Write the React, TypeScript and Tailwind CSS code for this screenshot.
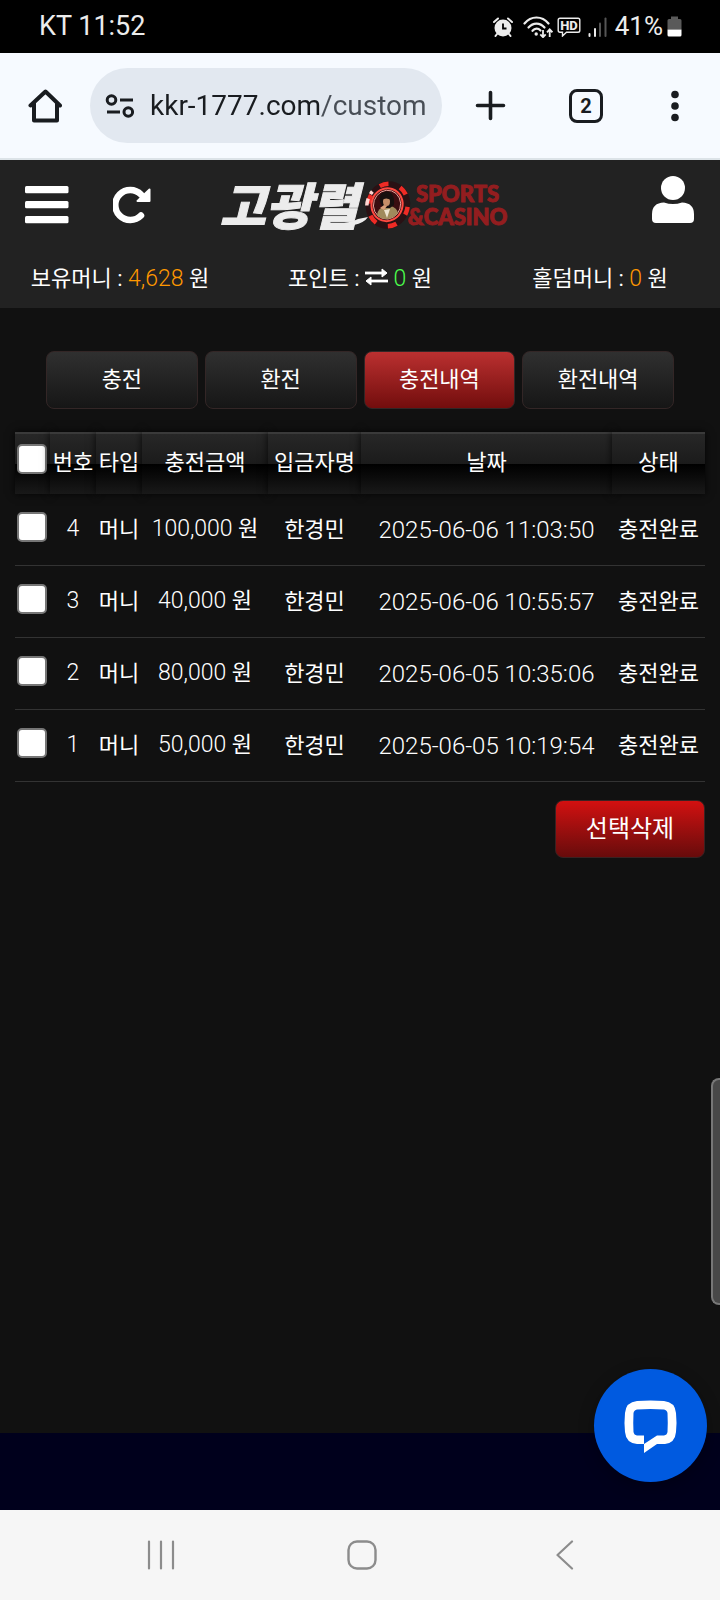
import React from 'react';

interface Deposit {
  id: number;
  type: string;
  amount: string;
  name: string;
  date: string;
  status: string;
}

const deposits: Deposit[] = [
  { id: 4, type: '머니', amount: '100,000', name: '한경민', date: '2025-06-06 11:03:50', status: '충전완료' },
  { id: 3, type: '머니', amount: '40,000', name: '한경민', date: '2025-06-06 10:55:57', status: '충전완료' },
  { id: 2, type: '머니', amount: '80,000', name: '한경민', date: '2025-06-05 10:35:06', status: '충전완료' },
  { id: 1, type: '머니', amount: '50,000', name: '한경민', date: '2025-06-05 10:19:54', status: '충전완료' },
];

const tabs = ['충전', '환전', '충전내역', '환전내역'];
const activeTab = '충전내역';

const columns = [
  { label: '번호', width: 'w-[46px]' },
  { label: '타입', width: 'w-[46px]' },
  { label: '충전금액', width: 'w-[126px]' },
  { label: '입금자명', width: 'w-[93px]' },
  { label: '날짜', width: '' },
  { label: '상태', width: 'w-[93px]' },
];

const thClass =
  'h-[62px] border-t-2 border-[#3a3a3a] bg-[linear-gradient(#272727,#1b1b1b_50%,#000_50%,#191919)] p-0 pb-1 font-normal shadow-[0_0_8px_rgba(0,0,0,0.8)]';

const StatusBar = () => (
  <div className="flex h-[53px] items-center justify-between bg-black pr-[38px] pl-[39px] text-[26px] text-[#ececec]">
    <span className="text-[27px]">KT 11:52</span>
    <div className="flex items-center">
      {/* alarm */}
      <svg className="mr-2.5 h-5 w-5" viewBox="0 0 20 20" fill="none">
        <circle cx="10" cy="11" r="8.5" fill="#ececec" />
        <path d="M1 5 5 1.5M19 5 15 1.5" stroke="#ececec" strokeWidth="2" strokeLinecap="round" />
        <path d="M4 17 2.5 19M16 17 17.5 19" stroke="#ececec" strokeWidth="2" strokeLinecap="round" />
        <path d="M10 6.5V11.5H13.5" stroke="#000" strokeWidth="1.8" />
      </svg>
      {/* wifi */}
      <svg className="mr-1 h-[22px] w-[30px]" viewBox="0 0 30 22" fill="none" stroke="#ececec">
        <path d="M1.5 7.5C8 -0.5 19 -0.5 25.5 7.5" strokeWidth="2.2" strokeLinecap="round" />
        <path d="M5.5 11.5C10 6.2 17 6.2 21.5 11.5" strokeWidth="2.2" strokeLinecap="round" />
        <path d="M9.5 14.8C11.8 12 15.2 12 17.5 14.5" strokeWidth="2.2" strokeLinecap="round" />
        <circle cx="13.2" cy="18" r="1.7" fill="#ececec" stroke="none" />
        <path d="M20 14V21M17.3 18.3 20 21.2 22.7 18.3" strokeWidth="1.8" />
        <path d="M26.7 21V14M24 16.3 26.7 13.4 29.4 16.3" strokeWidth="1.8" />
      </svg>
      {/* HD voice */}
      <svg className="mr-[7px] h-5 w-6" viewBox="0 0 24 20" fill="none">
        <path d="M3 1.2H21Q22.8 1.2 22.8 3V13.5Q22.8 15.3 21 15.3H9.5L5.5 19V15.3H3Q1.2 15.3 1.2 13.5V3Q1.2 1.2 3 1.2Z" stroke="#ececec" strokeWidth="1.4" />
        <text x="12" y="13" textAnchor="middle" fontSize="13" fontWeight="800" fontFamily="Roboto, sans-serif" fill="#ececec">HD</text>
      </svg>
      {/* signal */}
      <svg className="mr-2 h-5 w-[19px]" viewBox="0 0 19 20">
        <rect x="0.5" y="16" width="2" height="4" rx="1" fill="#ececec" />
        <rect x="6" y="11" width="2" height="9" rx="1" fill="#ececec" />
        <rect x="11" y="5.5" width="2" height="14.5" rx="1" fill="#555" />
        <rect x="16.5" y="0.5" width="2" height="19.5" rx="1" fill="#555" />
      </svg>
      <span className="mr-1">41%</span>
      {/* battery */}
      <svg className="h-[21px] w-[15px]" viewBox="0 0 15 21">
        <path d="M4 0.5H11V3H13Q14.5 3 14.5 4.5V13.5H0.5V4.5Q0.5 3 2 3H4Z" fill="#5a5a5a" />
        <path d="M0.5 13.5H14.5V19Q14.5 20.5 13 20.5H2Q0.5 20.5 0.5 19Z" fill="#fff" />
      </svg>
    </div>
  </div>
);

const BrowserBar = () => (
  <div className="flex h-[107px] items-center border-b-2 border-[#dce3e8] bg-[#f6faff] pr-7 pl-7">
    <button type="button" aria-label="Home">
      <svg className="h-[36px] w-[34px]" viewBox="0 0 34 36" fill="none" stroke="#191c20" strokeWidth="4" strokeLinejoin="round" strokeLinecap="round">
        <path d="M2.5 17.5 17.5 3.5 32 17.5M6 15V32.5H29V15" />
      </svg>
    </button>
    <div className="ml-7 flex h-[75px] min-w-0 flex-1 items-center rounded-full bg-[#e2e8f0] px-[15px]">
      <svg className="mr-4 h-6 w-[29px] shrink-0" viewBox="0 0 29 24" fill="none" stroke="#191c20" strokeWidth="3">
        <circle cx="6.5" cy="6" r="4.3" />
        <path d="M15 6H28M2 18H15" />
        <circle cx="23.3" cy="18" r="4.3" />
      </svg>
      <input
        type="text"
        readOnly
        aria-label="Address"
        defaultValue="kkr-1777.com/custom"
        className="h-12 w-full min-w-0 bg-[linear-gradient(90deg,#191c20_172px,#484e56_172px)] bg-clip-text text-[28px] text-transparent outline-none"
      />
    </div>
    <button type="button" aria-label="New tab" className="ml-[33px]">
      <svg className="h-[31px] w-[31px]" viewBox="0 0 31 31" stroke="#191c20" strokeWidth="3.6" strokeLinecap="round">
        <path d="M15.5 2.5V28.5M2.5 15.5H28.5" />
      </svg>
    </button>
    <button type="button" className="ml-[63px] flex h-[34px] w-[34px] items-center justify-center rounded-lg border-[3px] border-[#191c20] text-xl font-bold text-[#191c20]">
      2
    </button>
    <button type="button" aria-label="More" className="ml-[61px]">
      <svg className="h-8 w-7" viewBox="0 0 28 32" fill="#191c20">
        <circle cx="11" cy="4.5" r="3.8" />
        <circle cx="11" cy="16" r="3.8" />
        <circle cx="11" cy="27.5" r="3.8" />
      </svg>
    </button>
  </div>
);

const Chip = () => (
  <svg className="h-[50px] w-12 shrink-0" viewBox="0 0 48 50" fill="none">
    <g transform="rotate(18 24 25)">
      <ellipse cx="24" cy="25" rx="22" ry="24" fill="#2a1114" />
      <ellipse cx="24" cy="25" rx="19.6" ry="21.5" stroke="#ef2b25" strokeWidth="4.5" strokeDasharray="9 12.5" strokeDashoffset="5" />
      <path d="M4 32A21 22 0 0 1 5 17" stroke="#ffd5d0" strokeWidth="3.5" strokeDasharray="7 5" />
      <ellipse cx="23" cy="25" rx="15.5" ry="16.5" fill="#3a0d10" stroke="#ff4a41" strokeWidth="2" />
      <ellipse cx="23" cy="25" rx="13.5" ry="14.5" stroke="#ffb3ab" strokeWidth="0.8" />
    </g>
    {/* portrait */}
    <path d="M13 35Q14 28 20 27L27 26Q33 28 34 33Q29 39 22 39Q16 39 13 35Z" fill="#a08a5c" />
    <path d="M20 30 23 38 26 29Z" fill="#eee4d0" />
    <path d="M16 22Q14 12 23 11.5Q31 12 30 25L26 28H19Z" fill="#17100f" />
    <ellipse cx="22.5" cy="21.5" rx="3.5" ry="4.5" fill="#c58e68" />
    <path d="M17 17Q22 14 28 18L27 20Q22 17 18 20Z" fill="#17100f" />
    <path d="M16 28 20 25 23 26 20 30Z" fill="#dba17a" />
  </svg>
);

const Logo = () => (
  <a href="#" className="flex items-center">
    <span className="relative mr-1.5 pb-1 font-['Noto_Sans_CJK_KR',sans-serif] text-[50px] leading-[50px] font-black whitespace-nowrap text-[#ececec] italic [-webkit-text-stroke:1px_#ececec]">
      고광렬
      <svg className="absolute -right-2.5 bottom-1 h-3 w-12" viewBox="0 0 48 12" fill="#ececec">
        <path d="M2 6Q24 10 38 3L48 1Q44 7 34 9Q16 13 2 10Z" />
      </svg>
    </span>
    <Chip />
    <span className="-ml-1 flex flex-col items-center font-['Lato',sans-serif] text-[22px] leading-[23px] font-black text-[#931d1f] [-webkit-text-stroke:1px_#931d1f]">
      <span>SPORTS</span>
      <span>&amp;CASINO</span>
    </span>
  </a>
);

const Header = () => (
  <header className="bg-[#222]">
    <div className="flex h-[90px] items-center justify-between pr-[26px] pl-[25px]">
      <div className="flex items-center gap-11">
        <button type="button" aria-label="Menu">
          <svg className="h-[38px] w-11" viewBox="0 0 44 38" fill="#fff">
            <rect y="0" width="43.5" height="7.2" rx="1.5" />
            <rect y="15" width="43.5" height="7.2" rx="1.5" />
            <rect y="30" width="43.5" height="7.2" rx="1.5" />
          </svg>
        </button>
        <button type="button" aria-label="Refresh">
          <svg className="h-[38px] w-[38px]" viewBox="0 0 38 38" fill="none">
            <path d="M28 29.5A15 15 0 1 1 28 8.5" stroke="#fff" strokeWidth="6.5" strokeLinecap="round" />
            <path d="M36.5 3.5V15H24.5Z" fill="#fff" stroke="#fff" strokeWidth="2" strokeLinejoin="round" />
          </svg>
        </button>
      </div>
      <Logo />
      <button type="button" aria-label="Account" className="ml-[76px] self-start pt-4">
        <svg className="h-12 w-[42px]" viewBox="0 0 42 48" fill="#fff">
          <circle cx="21" cy="12" r="12" />
          <path d="M0 40V38Q0 27 12 26.5Q21 29.5 30 26.5Q42 27 42 38V43Q42 47 38 47H4Q0 47 0 43Z" />
        </svg>
      </button>
    </div>
    <div className="grid h-[58px] grid-cols-3 text-center leading-[58px]">
      <div>
        보유머니 : <span className="text-[23px] font-light text-[#ff9800]">4,628</span> 원
      </div>
      <div>
        포인트 :{' '}
        <button type="button" aria-label="Exchange points" className="align-baseline leading-none">
          <svg className="h-[18px] w-[23px]" viewBox="0 0 23 18" fill="#fff" stroke="#fff" strokeLinejoin="round">
            <path d="M0 5H17" strokeWidth="2.8" />
            <path d="M17 1 22 5 17 9Z" strokeWidth="1" />
            <path d="M6 13H23" strokeWidth="2.8" />
            <path d="M6 9 1 13 6 17Z" strokeWidth="1" />
          </svg>
        </button>{' '}
        <span className="text-[23px] font-light text-[#4cff4c]">0</span> 원
      </div>
      <div>
        홀덤머니 : <span className="text-[23px] font-light text-[#ff9800]">0</span> 원
      </div>
    </div>
  </header>
);

const Check: React.FC<{ label: string }> = ({ label }) => (
  <input
    type="checkbox"
    aria-label={label}
    className="block h-[30px] w-[30px] appearance-none rounded-[5px] border-2 border-[#767676] bg-white checked:bg-blue-600"
  />
);

const DepositTable = () => (
  <table className="w-full table-fixed border-separate border-spacing-0 text-center">
    <thead>
      <tr>
        <th className={`w-[35px] ${thClass}`}>
          <div className="-mt-1.5 pl-0.5">
            <Check label="전체선택" />
          </div>
        </th>
        {columns.map((col) => (
          <th key={col.label} className={`${col.width} ${thClass}`}>
            {col.label}
          </th>
        ))}
      </tr>
    </thead>
    <tbody>
      {deposits.map((row) => (
        <tr key={row.id} className="h-[72px] whitespace-nowrap *:border-b *:border-[#333] *:p-0">
          <td>
            <div className="-mt-1.5 pl-0.5">
              <Check label={`${row.id}`} />
            </div>
          </td>
          <td className="text-[23px] font-light">{row.id}</td>
          <td>{row.type}</td>
          <td>
            <span className="text-[23px] font-light">{row.amount}</span> 원
          </td>
          <td>{row.name}</td>
          <td className="text-2xl font-light">{row.date}</td>
          <td>{row.status}</td>
        </tr>
      ))}
    </tbody>
  </table>
);

const NavBar = () => (
  <nav className="flex h-[90px] items-center justify-between bg-[#f6f6f6] pr-[142px] pl-[146px]">
    <button type="button" aria-label="Recents">
      <svg className="h-[30px] w-[30px]" viewBox="0 0 30 30" stroke="#8c8c8c" strokeWidth="2.2" strokeLinecap="round">
        <path d="M3 1.5V28.5M15 1.5V28.5M27 1.5V28.5" />
      </svg>
    </button>
    <button type="button" aria-label="Home screen">
      <svg className="h-[30px] w-[30px]" viewBox="0 0 30 30" fill="none" stroke="#8c8c8c" strokeWidth="2.4">
        <rect x="1.5" y="1.5" width="27" height="27" rx="8.5" />
      </svg>
    </button>
    <button type="button" aria-label="Back">
      <svg className="h-[30px] w-[30px]" viewBox="0 0 30 30" fill="none" stroke="#8c8c8c" strokeWidth="2.2" strokeLinecap="round" strokeLinejoin="round">
        <path d="M24 1.5 9.5 15 24 28.5" />
      </svg>
    </button>
  </nav>
);

const App: React.FC = () => {
  return (
    <div className="flex min-h-screen flex-col bg-[#111] font-['Roboto','Noto_Sans_CJK_KR',sans-serif] text-[22px] text-white">
      <StatusBar />
      <BrowserBar />
      <div className="relative flex flex-1 flex-col">
        <Header />
        <main className="flex-1 px-[15px] pt-[43px]">
          <div className="grid grid-cols-4 gap-[7px] px-[31px]">
            {tabs.map((tab) => (
              <button
                key={tab}
                type="button"
                className={`h-[58px] rounded-lg border border-[#332626] bg-gradient-to-b pb-0.5 ${
                  tab === activeTab ? 'from-[#bb3030] to-[#730d0d]' : 'from-[#303030] to-[#161616]'
                }`}
              >
                {tab}
              </button>
            ))}
          </div>
          <div className="mt-[23px]">
            <DepositTable />
          </div>
          <div className="mt-[18px] flex justify-end">
            <button type="button" className="h-[58px] w-[150px] rounded-lg border border-[#3a2222] bg-gradient-to-b from-[#d31010] to-[#680b0b] text-2xl">
              선택삭제
            </button>
          </div>
        </main>
        <footer className="h-[77px] bg-[#00001c]" />

        {/* scroll thumb */}
        <div className="absolute right-0 bottom-[205px] h-[227px] w-[9px] rounded-l-lg border-2 border-r-0 border-[#777] bg-[#484848]" />

        <button
          type="button"
          aria-label="Chat"
          className="absolute right-[13px] bottom-7 flex h-[113px] w-[113px] items-center justify-center rounded-full bg-[#005ae0] pt-0.5 shadow-[0_4px_16px_rgba(0,0,0,0.3)]"
        >
          <svg className="h-[53px] w-[53px]" viewBox="0 0 53 53">
            <path
              fill="#fff"
              fillRule="evenodd"
              d="M13 1Q26.5 0 40 1Q51 2 52 13Q53 22.5 52 32Q51 43 41 44H33L20 53V44H13Q2 43 1 32Q0 22.5 1 13Q2 2 13 1ZM13 9.5Q10 10 9.5 13Q9 22.5 9.5 32Q10 35 13 35.5H20V44L33 35.5H40Q43 35 43.5 32Q44 22.5 43.5 13Q43 10 40 9.5Q26.5 8.500 13 9.500Z"
            />
          </svg>
        </button>
      </div>
      <NavBar />
    </div>
  );
};

export default App;
